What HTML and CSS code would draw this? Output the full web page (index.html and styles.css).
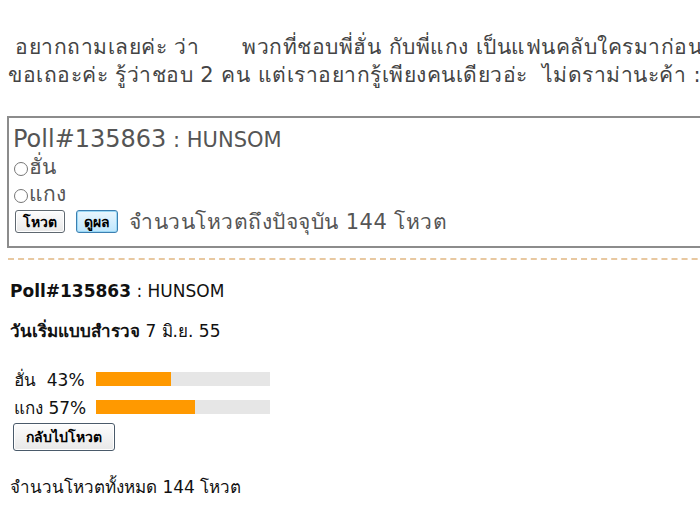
FILE: index.html
```html
<!DOCTYPE html>
<html lang="th">
<head>
  <meta charset="UTF-8" />
  <title>Poll#135863 : HUNSOM</title>
  <link rel="stylesheet" href="styles.css">
</head>
<body>

<div class="intro">
  <p>&nbsp;อยากถามเลยค่ะ ว่า &nbsp; &nbsp; &nbsp;พวกที่ชอบพี่ฮั่น กับพี่แกง เป็นแฟนคลับใครมาก่อน</p>
  <p>ขอเถอะค่ะ รู้ว่าชอบ 2 คน แต่เราอยากรู้เพียงคนเดียวอ่ะ &nbsp;ไม่ดราม่านะค้า :)</p>
</div>

<form class="poll-box" onsubmit="return false">
  <div class="poll-title"><span class="poll-no">Poll#135863</span> : HUNSOM</div>
  <label class="choice"><input type="radio" name="vote" value="1">ฮั่น</label>
  <label class="choice"><input type="radio" name="vote" value="2">แกง</label>
  <div class="poll-actions">
    <button class="btn">โหวต</button>
    <button class="btn btn-focus">ดูผล</button>
    <span class="count">จำนวนโหวตถึงปัจจุบัน 144 โหวต</span>
  </div>
</form>

<div class="result">
  <p><b>Poll#135863</b> : HUNSOM</p>
  <p class="date"><b>วันเริ่มแบบสำรวจ</b> 7 มิ.ย. 55</p>
  <div class="bars">
    <div class="bar-row">
      <span class="bar-label">ฮั่น &nbsp;43%</span>
      <span class="bar"><span class="fill" style="width: 43%"></span></span>
    </div>
    <div class="bar-row">
      <span class="bar-label">แกง 57%</span>
      <span class="bar"><span class="fill" style="width: 57%"></span></span>
    </div>
  </div>
  <button class="btn btn-back">กลับไปโหวต</button>
  <p class="total">จำนวนโหวตทั้งหมด 144 โหวต</p>
</div>

</body>
</html>
```

FILE: styles.css
```css
html, body {
  overflow: hidden;
}
body {
  margin: 0;
  padding: 33px 0 0 8px;
  width: 760px;
  font-family: Tahoma, "DejaVu Sans", "Liberation Sans", sans-serif;
  color: #444;
  background: #fff;
}
.intro p {
  margin: 0;
  font-size: 21px;
  letter-spacing: 0.5px;
  line-height: 28px;
  white-space: nowrap;
}
.poll-box {
  margin: 27px 0 0 -1px;
  border: 2px solid #8c8c8c;
  border-right: none;
  padding: 7px 4px 8px 4px;
  color: #555;
}
.poll-title {
  font-size: 21px;
  line-height: 28px;
}
.poll-no {
  font-size: 24px;
}
.choice {
  display: flex;
  align-items: center;
  font-size: 21px;
  line-height: 27px;
}
.choice input {
  margin: 2px 1px 0 1px;
  width: 14px;
  height: 14px;
}
.poll-actions {
  display: flex;
  align-items: center;
  gap: 11px;
  margin-top: -3px;
  padding-left: 2px;
}
.btn {
  font-family: Tahoma, "DejaVu Sans", sans-serif;
  font-size: 14px;
  font-weight: 600;
  color: #000;
  background: linear-gradient(#fdfdfd, #e8e8e8);
  border: 1px solid #5f6870;
  border-radius: 3px;
  padding: 0 7px;
  height: 23px;
  box-shadow: inset 0 0 0 1px #fff;
}
.btn-focus {
  border-color: #3c7fb1;
  background: linear-gradient(#eaf6fd, #bee6fd);
  box-shadow: inset 0 0 0 1px #9ad8f5;
}
.count {
  font-size: 21px;
  letter-spacing: 0.5px;
}
.poll-box + .result {
  border-top: 2px dashed #e8c8a0;
}
.result {
  margin-top: 10px;
  padding: 21px 0 0 2px;
  color: #111;
  font-size: 17px;
}
.result p {
  margin: 0 0 20px;
  line-height: 20px;
}
.result b {
  font-weight: bold;
}
.bars {
  margin-top: 24px;
  padding-left: 4px;
}
.bar-row {
  display: flex;
  align-items: center;
  height: 28px;
}
.bar-label {
  width: 82px;
  white-space: nowrap;
}
.bar {
  width: 174px;
  height: 14px;
  background: #e6e6e6;
}
.fill {
  display: block;
  height: 100%;
  background: #ff9900;
}
.btn-back {
  margin: 2px 0 0 3px;
  height: 28px;
  padding: 0 12px;
  border-color: #4a5a6a;
}
.result .total {
  margin-top: 26px;
}
```
